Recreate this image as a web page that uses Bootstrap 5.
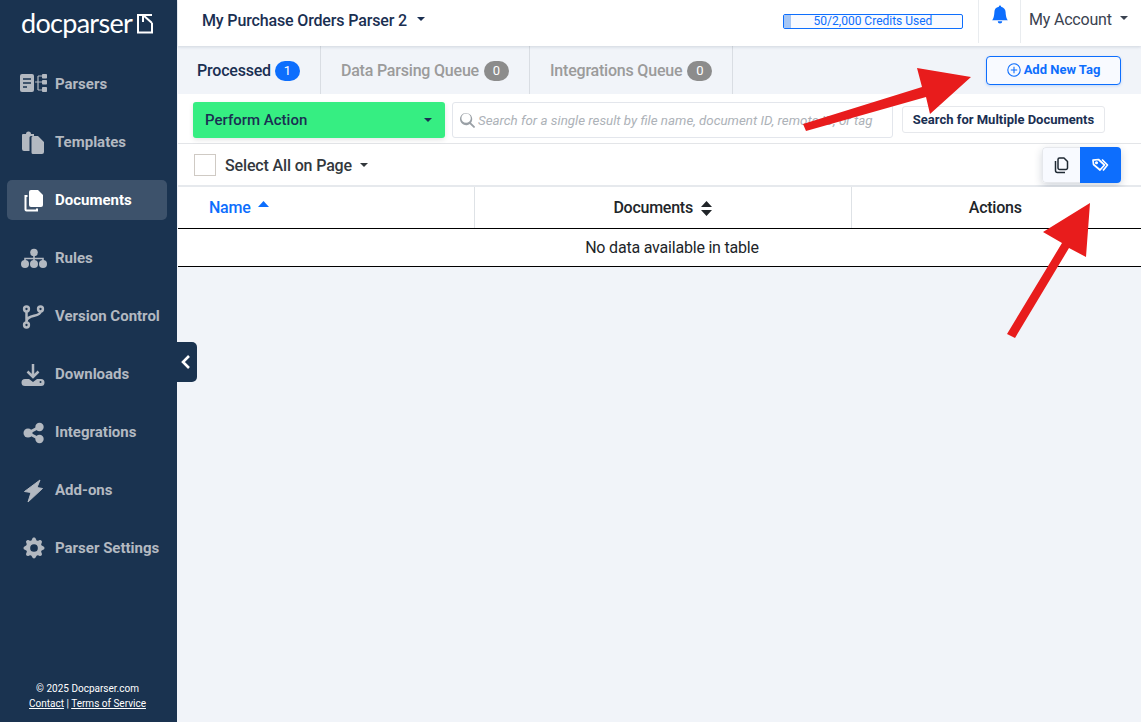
<!DOCTYPE html>
<html lang="en">
<head>
<meta charset="utf-8">
<title>Docparser</title>
<link href="https://cdn.jsdelivr.net/npm/bootstrap@5.3.0/dist/css/bootstrap.min.css" rel="stylesheet">
<style>
html,body{height:100%;}
body{font-family:Roboto,"Liberation Sans",sans-serif;background:#f1f4f9;color:#212529;font-size:16px;overflow:hidden;}
.shell{height:722px;position:relative;}
.side{width:177px;flex:0 0 177px;background:#1a3350;height:722px;}
.brand{height:64px;padding:6px 0 0 21px;color:#fff;}
.brand-word{font-family:"Lato","Open Sans",sans-serif;font-weight:400;font-size:27px;line-height:34px;letter-spacing:-.7px;}
.brand-mark{margin:8px 0 0 5px;flex:none;}
.side-link{height:40px;margin:0 10px 18px 7px;padding:0 0 0 13px;border-radius:5px;color:#b3b9c1;font-size:15px;font-weight:700;white-space:nowrap;text-decoration:none;}
.side-link.on{background:#3d526b;color:#fff;}
.side-ico{width:28px;height:26px;margin-right:7px;flex:none;}
.side-foot{font-size:10px;line-height:15px;color:#fff;font-weight:400;padding:0 2px 11px 0;}
.side-foot a{color:#fff;}
.collapse-tab{position:absolute;left:177px;top:342px;width:20px;height:40px;background:#1a3350;border-radius:0 5px 5px 0;}
.main-col{min-width:0;padding-left:1px;letter-spacing:-.15px;}
.topbar{height:46px;background:#fff;box-shadow:0 1px 3px rgba(30,50,80,.16);position:relative;padding:0 0 5px 24px;}
.parser-name{font-size:16px;font-weight:500;color:#1a2f52;}
.parser-name::after{margin-left:10px;}
.sel-all::after{margin-left:8px;}
.credit{width:180px;height:15px;border:1px solid #0d6efd;border-radius:2px;background:#f8faff;color:#0d6efd;font-size:12px;line-height:13px;letter-spacing:0;text-align:center;position:relative;margin:2px 15px 0 0;}
.credit-fill{position:absolute;left:0;top:0;bottom:0;background:#a5c6f5;}
.credit-txt{position:relative;}
.top-cell{height:44px;align-self:flex-start;border-left:1px solid #e9ecef;}
.bell-cell{width:42px;padding-top:6px;}
.acct{width:121px;font-size:16px;color:#3a4250;padding:0 0 0 8px;line-height:42px;letter-spacing:-.2px;}
.acct::after{margin-left:8px;}
.tabrow{height:48px;}
.tabi{height:48px;padding:2px 20px 0;border-right:1px solid #d9dde3;font-size:16px;font-weight:500;color:#9b9b9b;letter-spacing:-.2px;}
.tabi.on{color:#1a2f52;padding-left:19px;}
.tabi .badge{font-size:13px;font-weight:400;padding:0;width:25px;height:20px;line-height:20px;margin-left:5px;background:#8c8c8c;letter-spacing:0;}
.tabi.on .badge{background:#0d6efd;margin-left:4px;}
.btn-addtag{width:135px;height:29px;margin-right:20px;padding:0;gap:3px;font-size:13px;font-weight:700;letter-spacing:0;border-radius:4px;background:#f8faff;color:#0d6efd;border:1px solid #0d6efd;box-shadow:0 1px 3px rgba(13,110,253,.2);}
.toolrow{height:50px;background:#fff;border-bottom:1px solid #e3e5e8;padding:8px 36px 0 15px;}
.act-green{width:252px;height:36px;background:#36ee82;color:#1a2f52;font-size:15px;font-weight:500;letter-spacing:0;border-radius:3px;padding:0 12px 0 11px;box-shadow:0 2px 5px rgba(0,0,0,.1);}
.act-green:hover{background:#36ee82;color:#1a2f52;}
.act-green::after{margin-left:0;}
.finder{width:441px;height:36px;margin-left:7px;border:1px solid #e3e6ec;border-radius:3px;padding-left:7px;background:#fff;}
.finder input{border:0;outline:0;flex:1;min-width:0;font-size:13.33px;font-style:italic;letter-spacing:0;padding:2px 0 0 3px;background:transparent;}
.finder input::placeholder{color:#adb2b8;opacity:1;}
.btn-multi{height:27px;margin:4px 0 0 9px;width:203px;padding:0;font-size:13px;font-weight:700;letter-spacing:0;color:#1a2f52;border:1px solid #e6e8ec;border-radius:3px;background:#fff;white-space:nowrap;}
.selrow{height:43px;background:#fff;padding:1px 20px 0 16px;border-bottom:2px solid #e6e9ed;}
.box-sel{width:22px;height:22px;border:1px solid #cfcac4;background:#fff;}
.sel-all{font-size:16px;font-weight:500;color:#33383d;margin:2px 0 0 9px;}
.view-sw{height:36px;width:79px;border-radius:4px;box-shadow:0 3px 8px rgba(30,50,80,.2);overflow:hidden;}
.view-a{width:38px;background:#f8faff;border:1px solid #e6e8ec;border-right:0;border-radius:4px 0 0 4px;}
.view-b{width:41px;background:#0d6efd;}
.data-tb{table-layout:fixed;width:963px;margin:0;background:#fff;--bs-table-bg:#fff;}
.data-tb th{height:41px;padding:1px 0 0;font-size:16px;font-weight:500;letter-spacing:-.25px;vertical-align:middle;text-align:center;border-bottom:1px solid #000;border-right:1px solid #dee2e6;color:#212529;}
.data-tb th:last-child{border-right:0;padding-right:2px;}
.data-tb th.th-name{text-align:left;padding-left:31px;color:#0d6efd;}
.sort-up{margin:0 0 9px 4px;}
.data-tb td{height:38px;padding:2px 0 0 25px;vertical-align:middle;text-align:center;font-size:16px;letter-spacing:-.2px;border-bottom:1px solid #000;color:#212529;}
.arrows{position:absolute;left:0;top:0;width:1141px;height:722px;pointer-events:none;}
</style>
</head>
<body>
<div class="shell d-flex">
  <aside class="side d-flex flex-column">
    <div class="brand d-flex align-items-start">
      <span class="brand-word">docparser</span>
      <svg class="brand-mark" width="16" height="20" viewBox="0 0 16 20" fill="none" stroke="#fff" stroke-width="2"><path d="M6 1H1v17.500h14V9"/><path d="M6 8V1h9M6 1l9 8"/></svg>
    </div>
    <nav class="nav flex-column flex-nowrap">
      <a class="side-link d-flex align-items-center" href="#"><svg class="side-ico" viewBox="0 0 28 26" fill="#b3b9c1"><rect x="0" y="3" width="14" height="18" rx="2"/><path d="M3 8h8M3 12h8M3 16h4" stroke="#1a3350" stroke-width="1.500"/><path d="M15 11h3M18 5v14M18 5h4M18 11h4M18 19h4" stroke="#b3b9c1" stroke-width="1.200" fill="none"/><rect x="22" y="3" width="5" height="4.500" rx=".8"/><rect x="22" y="9" width="5" height="4.500" rx=".8"/><rect x="22" y="16" width="5" height="5" rx=".8"/></svg>Parsers</a>
      <a class="side-link d-flex align-items-center" href="#"><svg class="side-ico" viewBox="0 0 28 26" fill="#b3b9c1"><path d="M3 5h3a2.500 2.500 0 0 1 5 0h3v2h-3a1.500 1.500 0 0 0-1.500 1.500V22H4a2 2 0 0 1-2-2V6a1 1 0 0 1 1-1z"/><path d="M13 7h5l6 6v10a2 2 0 0 1-2 2h-9a1.500 1.500 0 0 1-1.500-1.500v-15A1.500 1.500 0 0 1 13 7z"/></svg>Templates</a>
      <a class="side-link on d-flex align-items-center" href="#"><svg class="side-ico" viewBox="0 0 28 26" fill="#fff"><path d="M11 3h7l5 5v10a2 2 0 0 1-2 2H11a2 2 0 0 1-2-2V5a2 2 0 0 1 2-2z"/><path d="M7.500 9H5.500v13.500a1 1 0 0 0 1 1H17v-2" fill="none" stroke="#fff" stroke-width="2"/></svg>Documents</a>
      <a class="side-link d-flex align-items-center" href="#"><svg class="side-ico" viewBox="0 0 28 26" fill="#b3b9c1"><circle cx="14" cy="7.500" r="3.800"/><circle cx="5" cy="19" r="4"/><circle cx="14" cy="19" r="4"/><circle cx="23" cy="19" r="4"/><path d="M14 10v6M5 16v-2.500h18V16" fill="none" stroke="#b3b9c1" stroke-width="1.600"/></svg>Rules</a>
      <a class="side-link d-flex align-items-center" href="#"><svg class="side-ico" viewBox="0 0 28 26" fill="none" stroke="#b3b9c1" stroke-width="2.500"><circle cx="6.500" cy="6" r="2.400"/><circle cx="6.500" cy="22" r="2.400"/><circle cx="20.500" cy="6" r="2.400"/><path d="M6.500 8.500v11M20.500 8.500c0 6-14 2.500-14 10"/></svg>Version Control</a>
      <a class="side-link d-flex align-items-center" href="#"><svg class="side-ico" viewBox="0 0 28 26"><path d="M13 3v13M7.500 10.500 13 16l5.500-5.500" fill="none" stroke="#b3b9c1" stroke-width="2.500"/><path d="M5 18h4l4 3 4-3h4a3.500 3.500 0 0 1 0 7H5a3.500 3.500 0 0 1 0-7z" fill="#b3b9c1"/><circle cx="20.500" cy="21" r="1" fill="#1a3350"/></svg>Downloads</a>
      <a class="side-link d-flex align-items-center" href="#"><svg class="side-ico" viewBox="0 0 28 26" fill="#b3b9c1"><circle cx="8" cy="14" r="4.500"/><circle cx="19.500" cy="8" r="4.200"/><circle cx="19.500" cy="20" r="4.200"/><path d="M8 14 19.500 8M8 14l11.500 6" stroke="#b3b9c1" stroke-width="3"/></svg>Integrations</a>
      <a class="side-link d-flex align-items-center" href="#"><svg class="side-ico" viewBox="0 0 28 26" fill="#b3b9c1" stroke="#b3b9c1" stroke-linejoin="round"><path d="M20 3 4.500 14.500l6.500 1L8 25l14.500-13.500-5.500-1z"/></svg>Add-ons</a>
      <a class="side-link d-flex align-items-center" href="#"><svg class="side-ico" viewBox="-2.670 -1.900 21.330 19.800" fill="#b3b9c1"><path d="M9.405 1.050c-.413-1.400-2.397-1.400-2.810 0l-.1.340a1.464 1.464 0 0 1-2.105.872l-.31-.17c-1.283-.698-2.686.705-1.987 1.987l.169.311c.446.820.023 1.841-.872 2.105l-.34.1c-1.400.413-1.400 2.397 0 2.810l.34.1a1.464 1.464 0 0 1 .872 2.105l-.17.31c-.698 1.283.705 2.686 1.987 1.987l.311-.169a1.464 1.464 0 0 1 2.105.872l.1.34c.413 1.400 2.397 1.400 2.810 0l.1-.34a1.464 1.464 0 0 1 2.105-.872l.31.17c1.283.698 2.686-.705 1.987-1.987l-.169-.311a1.464 1.464 0 0 1 .872-2.105l.34-.1c1.400-.413 1.400-2.397 0-2.810l-.34-.1a1.464 1.464 0 0 1-.872-2.105l.17-.31c.698-1.283-.705-2.686-1.987-1.987l-.311.169a1.464 1.464 0 0 1-2.105-.872l-.1-.34zM8 10.930a2.929 2.929 0 1 1 0-5.860 2.929 2.929 0 0 1 0 5.858z"/></svg>Parser Settings</a>
    </nav>
    <div class="side-foot mt-auto text-center">&copy; 2025 Docparser.com<br><a href="#">Contact</a> | <a href="#">Terms of Service</a></div>
  </aside>

  <div class="collapse-tab d-flex align-items-center justify-content-center">
    <svg width="12" height="16" viewBox="0 0 12 16" fill="none" stroke="#fff" stroke-width="2.600"><path d="M8 2 2 8l6 6"/></svg>
  </div>

  <main class="main-col flex-grow-1 d-flex flex-column">
    <header class="topbar d-flex align-items-center">
      <span class="parser-name dropdown-toggle">My Purchase Orders Parser 2</span>
      <div class="ms-auto d-flex align-items-center">
        <div class="credit"><div class="credit-fill" style="width:4%"></div><span class="credit-txt">50/2,000 Credits Used</span></div>
        <div class="top-cell bell-cell d-flex justify-content-center">
          <svg width="18" height="19" viewBox="0 0 16 16" fill="#0d6efd"><path d="M8 16a2 2 0 0 0 2-2H6a2 2 0 0 0 2 2zm.995-14.901a1 1 0 1 0-1.990 0A5.002 5.002 0 0 0 3 6c0 1.098-.5 6-2 7h14c-1.500-1-2-5.902-2-7 0-2.420-1.720-4.440-4.005-4.901z"/></svg>
        </div>
        <div class="top-cell acct dropdown-toggle">My Account</div>
      </div>
    </header>

    <div class="tabrow d-flex align-items-center">
      <div class="tabi on d-flex align-items-center">Processed<span class="badge rounded-pill">1</span></div>
      <div class="tabi d-flex align-items-center">Data Parsing Queue<span class="badge rounded-pill">0</span></div>
      <div class="tabi d-flex align-items-center">Integrations Queue<span class="badge rounded-pill">0</span></div>
      <button class="btn btn-addtag ms-auto d-flex align-items-center justify-content-center" type="button">
        <svg width="14" height="14" viewBox="0 0 14 14" fill="none" stroke="#0d6efd" stroke-width="1.100"><circle cx="7" cy="7" r="6.200"/><path d="M7 3.800v6.400M3.800 7h6.400"/></svg>Add New Tag
      </button>
    </div>

    <div class="toolrow d-flex align-items-start">
      <button class="btn act-green dropdown-toggle d-flex align-items-center justify-content-between" type="button">Perform Action</button>
      <div class="finder d-flex align-items-center">
        <svg width="15" height="15" viewBox="0 0 16 16" fill="#9aa0a6"><path d="M11.742 10.344a6.500 6.500 0 1 0-1.397 1.398h-.001l3.850 3.850a1 1 0 0 0 1.415-1.414l-3.850-3.850zm-5.242.156a5 5 0 1 1 0-10 5 5 0 0 1 0 10z"/></svg>
        <input type="text" placeholder="Search for a single result by file name, document ID, remote ID, or tag">
      </div>
      <button class="btn btn-multi" type="button">Search for Multiple Documents</button>
    </div>

    <div class="selrow d-flex align-items-center">
      <span class="box-sel"></span>
      <span class="sel-all dropdown-toggle">Select All on Page</span>
      <div class="view-sw ms-auto d-flex">
        <div class="view-a d-flex align-items-center justify-content-center">
          <svg width="15" height="17" viewBox="0 0 15 17" fill="none" stroke="#1f2933" stroke-width="1.500" stroke-linejoin="round"><path d="M5.500 1h4.500l3.500 3.500V11a1.500 1.500 0 0 1-1.500 1.500H5.500A1.500 1.500 0 0 1 4 11V2.500A1.500 1.500 0 0 1 5.500 1z"/><path d="M1.500 4v9.500a2 2 0 0 0 2 2H11"/></svg>
        </div>
        <div class="view-b d-flex align-items-center justify-content-center">
          <svg width="17" height="15" viewBox="0 0 17 15" fill="none" stroke="#fff" stroke-width="1.700" stroke-linejoin="round"><path d="M1 2.200 6.500 1.500l6 5.500-4.500 5-6.500-5.500z"/><path d="M10 1.500l5.500 5.500-4.500 5.500"/><circle cx="4.500" cy="4.800" r=".7" fill="#fff"/></svg>
        </div>
      </div>
    </div>

    <table class="table data-tb">
      <colgroup><col style="width:296px"><col style="width:377px"><col style="width:290px"></colgroup>
      <thead>
        <tr>
          <th class="th-name">Name <svg class="sort-up" width="11" height="6" viewBox="0 0 11 6" fill="#0d6efd"><path d="M5.500 0 11 6H0z"/></svg></th>
          <th>Documents <svg class="ms-1" width="11" height="15" viewBox="0 0 11 15" fill="#212529"><path d="M5.500 0 11 6H0zM5.500 15 0 9h11z"/></svg></th>
          <th>Actions</th>
        </tr>
      </thead>
      <tbody><tr><td colspan="3">No data available in table</td></tr></tbody>
    </table>
  </main>

  <svg class="arrows" viewBox="0 0 1141 722" fill="#e81c1c">
    <polygon points="803,124 922,87 917,68 971,77 930,114 926,97 806,131"/>
    <polygon points="1007,334 1062,243 1043,232 1090,203 1086,257 1069,248 1015,338"/>
  </svg>
</div>
<script src="https://cdn.jsdelivr.net/npm/bootstrap@5.3.0/dist/js/bootstrap.bundle.min.js"></script>
</body>
</html>
